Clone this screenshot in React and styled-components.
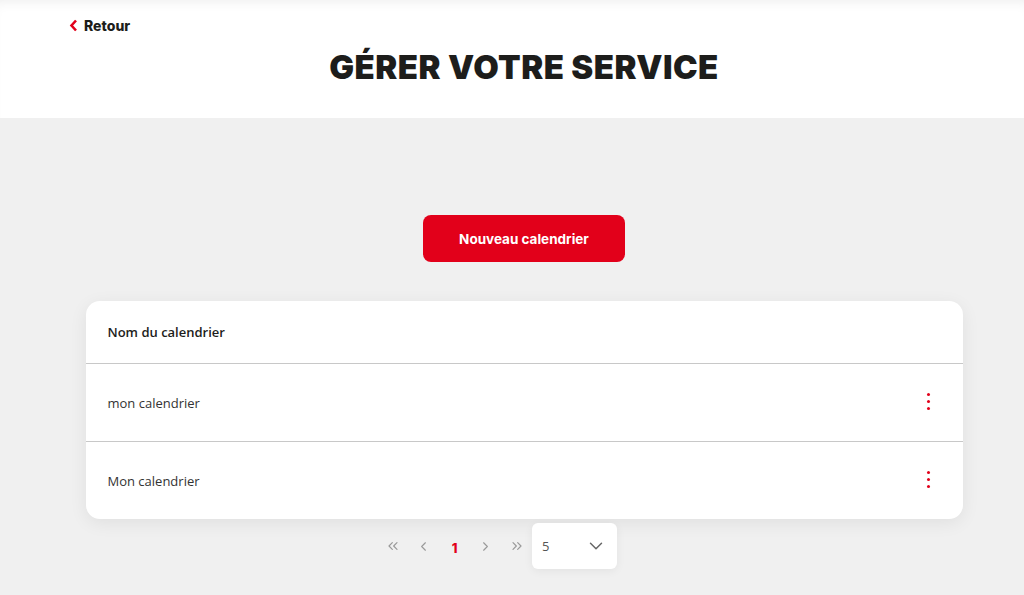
import React from 'react';
import styled, { createGlobalStyle } from 'styled-components';
import { ChevronLeft, ChevronRight, ChevronsLeft, ChevronsRight, ChevronDown } from 'lucide-react';

const GlobalStyle = createGlobalStyle`
    html, body {
        margin: 0;
        padding: 0;
        background: #f0f0f0;
        font-family: "Open Sans", "Liberation Sans", sans-serif;
        color: #333;
    }
`;

const Page = styled.div`
    min-height: 595px;
    background: #f0f0f0;
`;

const Header = styled.header`
    height: 118px;
    box-sizing: border-box;
    background: #fff;
    padding: 15px 0 0 24px;
    box-shadow: inset 0 10px 14px -10px rgba(0, 0, 0, 0.09);
`;

const BackLink = styled.a`
    display: inline-flex;
    align-items: center;
    gap: 6px;
    margin-left: 45px;
    height: 20px;
    font-family: Inter, "Liberation Sans", sans-serif;
    font-weight: 800;
    font-size: 14px;
    color: #1d1d1b;
    text-decoration: none;
    cursor: pointer;
`;

const Title = styled.h1`
    margin: 9px 0 0;
    text-align: center;
    font-family: Inter, "Liberation Sans", sans-serif;
    font-weight: 900;
    font-size: 33px;
    letter-spacing: 0.45px;
    line-height: 42px;
    color: #1d1d1b;
`;

const Main = styled.main`
    padding: 97px 0 30px 24px;
    display: flex;
    flex-direction: column;
    align-items: center;
`;

const PrimaryButton = styled.button`
    width: 202px;
    height: 47px;
    border: none;
    border-radius: 8px;
    background: #e2001a;
    color: #fff;
    font-family: Inter, "Liberation Sans", sans-serif;
    font-weight: 700;
    font-size: 13.5px;
    cursor: pointer;
`;

const Card = styled.section`
    width: 877px;
    margin-top: 39px;
    background: #fff;
    border-radius: 14px;
    box-shadow: 0 4px 18px rgba(0, 0, 0, 0.07);
    overflow: hidden;
`;

const Row = styled.div`
    height: ${p => (p.$head ? '62px' : '77px')};
    display: flex;
    align-items: center;
    justify-content: space-between;
    padding: 0 28px 0 22px;
    font-size: 13px;
    font-weight: ${p => (p.$head ? 600 : 400)};
    color: ${p => (p.$head ? '#1d1d1b' : '#333')};
    & + & {
        border-top: 1px solid #c8c8c8;
    }
`;

const MenuButton = styled.button`
    display: flex;
    flex-direction: column;
    gap: 4px;
    padding: 0 5px 2px;
    border: none;
    background: transparent;
    cursor: pointer;
`;

const Dot = styled.span`
    width: 3px;
    height: 3px;
    border-radius: 50%;
    background: #e2001a;
`;

const Pagination = styled.nav`
    display: flex;
    align-items: center;
    margin-top: 4px;
    margin-right: 54px;
`;

const PageArrow = styled.button`
    display: flex;
    align-items: center;
    justify-content: center;
    width: 31px;
    height: 46px;
    padding: 0;
    border: none;
    background: transparent;
    color: #9a9a9a;
    cursor: pointer;
`;

const PageNumber = styled.span`
    width: 31px;
    text-align: center;
    font-family: Inter, "Liberation Sans", sans-serif;
    font-weight: 800;
    font-size: 13px;
    color: #e2001a;
    padding-top: 4px;
`;

const Select = styled.div`
    display: flex;
    align-items: center;
    justify-content: space-between;
    width: 85px;
    height: 46px;
    box-sizing: border-box;
    padding: 0 10px;
    background: #fff;
    border-radius: 6px;
    box-shadow: 0 2px 10px rgba(0, 0, 0, 0.06);
    font-size: 13px;
    color: #555;
`;

const calendars = ['mon calendrier', 'Mon calendrier'];

export default function App() {
    return (
        <Page>
            <GlobalStyle />
            <Header>
                <BackLink>
                    <svg width="9" height="13" viewBox="0 0 9 13">
                        <path d="M7 1.5 L2.5 6.5 L7 11.5" fill="none" stroke="#e2001a" strokeWidth="2.6" strokeLinejoin="miter" />
                    </svg>
                    Retour
                </BackLink>
                <Title>GÉRER VOTRE SERVICE</Title>
            </Header>
            <Main>
                <PrimaryButton>Nouveau calendrier</PrimaryButton>
                <Card>
                    <Row $head>Nom du calendrier</Row>
                    {calendars.map(name => (
                        <Row key={name}>
                            {name}
                            <MenuButton aria-label="Options">
                                <Dot /><Dot /><Dot />
                            </MenuButton>
                        </Row>
                    ))}
                </Card>
                <Pagination>
                    <PageArrow><ChevronsLeft size={16} strokeWidth={1.8} /></PageArrow>
                    <PageArrow><ChevronLeft size={15} strokeWidth={1.8} /></PageArrow>
                    <PageNumber>1</PageNumber>
                    <PageArrow><ChevronRight size={15} strokeWidth={1.8} /></PageArrow>
                    <PageArrow><ChevronsRight size={16} strokeWidth={1.8} /></PageArrow>
                    <Select>
                        5
                        <ChevronDown size={22} strokeWidth={1.6} color="#666" />
                    </Select>
                </Pagination>
            </Main>
        </Page>
    );
}
